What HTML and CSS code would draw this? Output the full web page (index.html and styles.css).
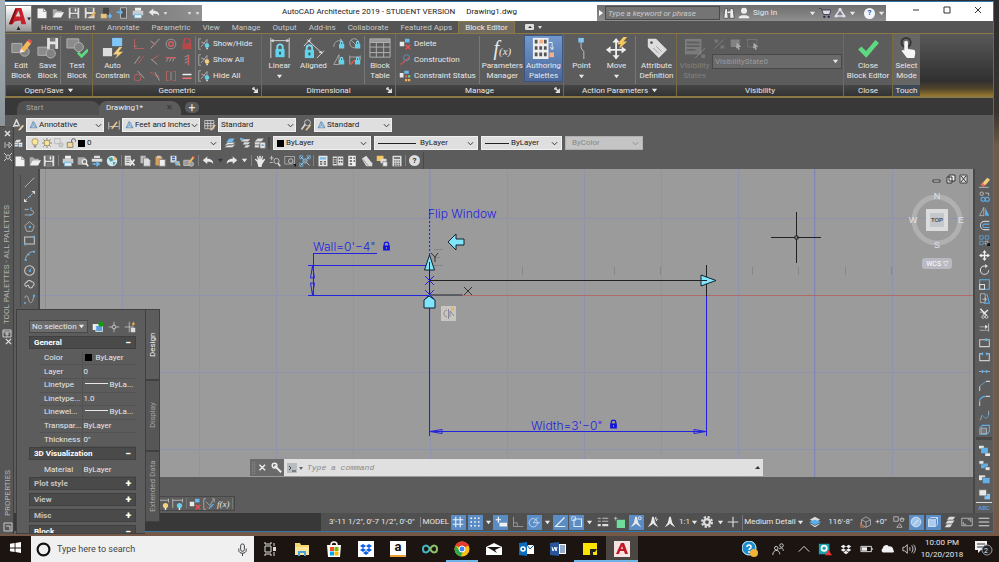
FILE: index.html
```
<!DOCTYPE html>
<html lang="en">
<head>
  <meta charset="utf-8">
  <title>AutoCAD Architecture 2019 - STUDENT VERSION</title>
  <link rel="stylesheet" href="styles.css">
</head>
<body>
  <!-- icon sprite -->
  <svg class="sprite" aria-hidden="true">
    <symbol id="new" viewBox="0 0 16 16"><path d="M2 2h8l4 4v9H2z" fill="#f2f2f2"/><path d="M10 2v4h4" stroke="#888"/></symbol>
    <symbol id="open" viewBox="0 0 16 16"><path d="M1 14V3h5l1 2h6v2H5z" fill="#aaa"/><path d="M5 7h11l-4 7H1z" fill="#eee"/></symbol>
    <symbol id="save" viewBox="0 0 16 16"><path d="M1 1h14v14H1z" fill="#ddd"/><path d="M4 1v6h8V1M4 15v-5h8v5" fill="#777" stroke="#555"/><path d="M9 2h2v4H9z" fill="#eee"/></symbol>
    <symbol id="print" viewBox="0 0 16 16"><path d="M4 1h8v4H4z" fill="#eee"/><path d="M1 5h14v6H1z" fill="#ccc"/><path d="M3 9h10v6H3z" fill="#7ec4ee"/><path d="M4 11h8v3H4z" fill="#eee"/></symbol>
    <symbol id="saveas" viewBox="0 0 16 16"><path d="M1 1h13v14H1z" fill="#ddd"/><path d="M4 1v5h7V1M4 15v-5h8" fill="#777" stroke="#555"/><path d="M8 13l6-7 2 2-6 6z" fill="#f0b050"/></symbol>
    <symbol id="phoneout" viewBox="0 0 16 16"><path d="M4 1h8v12H4z" fill="#444"/><path d="M1 9h8v6H1z" fill="#e9c27a"/><path d="M9 12h6M12 9l3 3-3 3" stroke="#6ab7f0" stroke-width="2"/></symbol>
    <symbol id="phonein" viewBox="0 0 16 16"><path d="M6 1h8v14H6z" fill="#555" stroke="#ccc"/><path d="M1 7h7M5 4l3 3-3 3" stroke="#6ab7f0" stroke-width="2"/></symbol>
    <symbol id="undo" viewBox="0 0 16 16"><path d="M1 7l6-5v3c5 0 8 2 8 7-2-3-4-3-8-3v3z" fill="currentColor"/></symbol>
    <symbol id="redo" viewBox="0 0 16 16"><path d="M15 7L9 2v3c-5 0-8 2-8 7 2-3 4-3 8-3v3z" fill="currentColor"/></symbol>
    <symbol id="down" viewBox="0 0 8 8"><path d="M1 2h6L4 6z" fill="currentColor"/></symbol>
    <symbol id="chev" viewBox="0 0 8 8"><path d="M1 2.500l3 3 3-3" stroke="currentColor"/></symbol>
    <symbol id="corner" viewBox="0 0 8 8"><path d="M1 1h2M1 1v2M2 2l4 4M6 2v4H2" stroke="currentColor" stroke-width="1.500"/></symbol>

    <symbol id="editblock" viewBox="0 0 24 24"><path d="M2 7h11v10H2z" fill="#8b8b8b" stroke="#b5b5b5"/><circle cx="16" cy="16" r="5" fill="#828282" stroke="#b5b5b5"/><path d="M12 13l7-9 4 3-7 9-5 1z" fill="#f3b75c"/><path d="M19 4l2-2 3 3-1 2z" fill="#f05050"/><path d="M12 13l4 3-5 1z" fill="#eee"/></symbol>
    <symbol id="saveblock" viewBox="0 0 24 24"><path d="M1 11h11v9H1z" fill="#8b8b8b" stroke="#b5b5b5"/><circle cx="15" cy="18" r="5" fill="#828282" stroke="#b5b5b5"/><path d="M11 1h12v12H11z" fill="#e4e4e4"/><path d="M14 1h6v4h-6zM14 8h6v5h-6z" fill="#777"/></symbol>
    <symbol id="testblock" viewBox="0 0 24 24"><path d="M1 2h13v10H1z" fill="#8b8b8b" stroke="#b5b5b5"/><circle cx="14" cy="11" r="5" fill="#828282" stroke="#b5b5b5"/><path d="M13 17l4 4 7-7" stroke="#5ed982" stroke-width="3"/></symbol>
    <symbol id="auto" viewBox="0 0 24 24"><path d="M11 1h11v9H11z" fill="#80c6f8"/><path d="M1 12h10v9H1z" fill="#ddd"/><path d="M19 11l-7 8h5l-3 5 9-8h-5l4-5z" fill="#f8cf7a"/></symbol>
    <symbol id="g1" viewBox="0 0 16 16"><path d="M2 1v13h13" stroke="#cf6060"/><path d="M5 11h-3" stroke="#999"/></symbol>
    <symbol id="g2" viewBox="0 0 16 16"><path d="M2 14L14 1" stroke="#bbb"/><path d="M2 4l6 4" stroke="#bbb"/><circle cx="8" cy="8" r="1.500" fill="#cf6060"/></symbol>
    <symbol id="g3" viewBox="0 0 16 16"><circle cx="8" cy="8" r="6.500" stroke="#aaa"/><circle cx="8" cy="8" r="3" stroke="#d06060" stroke-width="2"/></symbol>
    <symbol id="g4" viewBox="0 0 16 16"><path d="M4 7V4a4 4 0 018 0v3" stroke="#c44" stroke-width="2"/><path d="M2 7h12v8H2z" fill="#b84848"/></symbol>
    <symbol id="g5" viewBox="0 0 16 16"><path d="M2 13l7-10" stroke="#bbb"/><path d="M7 13l7-10" stroke="#cf6060"/></symbol>
    <symbol id="g6" viewBox="0 0 16 16"><path d="M3 8L13 2M8 5" stroke="#cf6060"/><path d="M3 7l8 7" stroke="#bbb"/></symbol>
    <symbol id="g7" viewBox="0 0 16 16"><path d="M1 5h14" stroke="#cf6060" stroke-width="2"/><path d="M2 10l2-4M6 10l2-4M10 10l2-4" stroke="#aaa"/></symbol>
    <symbol id="g8" viewBox="0 0 16 16"><path d="M10 1v14" stroke="#cf6060" stroke-width="2"/><path d="M5 4l4-2M5 8l4-2M5 12l4-2" stroke="#aaa"/></symbol>
    <symbol id="g9" viewBox="0 0 16 16"><circle cx="6" cy="10" r="4.500" stroke="#d06060"/><path d="M6 1l9 10" stroke="#bbb"/></symbol>
    <symbol id="g10" viewBox="0 0 16 16"><path d="M1 4c6-2 5 6 13 4" stroke="#cf6060"/><path d="M8 3l6 11" stroke="#bbb"/></symbol>
    <symbol id="g11" viewBox="0 0 16 16"><path d="M5 2H2v12h3M11 2h3v12h-3" stroke="#cf6060"/><path d="M8 2v12" stroke="#aaa"/></symbol>
    <symbol id="g12" viewBox="0 0 16 16"><path d="M2 6h12" stroke="#eee" stroke-width="2"/><path d="M2 11h12" stroke="#f07070" stroke-width="2"/></symbol>
    <symbol id="sh" viewBox="0 0 16 16"><path d="M4 1H1v14h3M4 12L12 2v6M4 5l6 3" stroke="#bbb"/><circle cx="12" cy="10" r="3" fill="currentColor"/><path d="M11 13h2v2h-2z" fill="#eee"/></symbol>
    <symbol id="shx" viewBox="0 0 16 16"><path d="M4 1H1v14h3M12 1h3v5M4 5l5 5 5-8" stroke="#bbb"/><path d="M8 14l6-6" stroke="#60b0ea" stroke-width="2"/><path d="M4 11l3 3" stroke="#e55"/></symbol>
    <symbol id="dimlamp" viewBox="0 0 16 16"><path d="M1 1v12M1 3h13M14 1v5" stroke="#ccc"/><circle cx="10" cy="10" r="3.500" fill="currentColor"/><path d="M9 13h2v3H9z" fill="#eee"/></symbol>
    <symbol id="linear" viewBox="0 0 24 24"><path d="M2 1v22M22 1v22M2 4h20" stroke="#ddd"/><path d="M2 4l3-2v4zM22 4l-3-2v4z" fill="#ddd"/><path d="M9 14v-3a3 3 0 016 0v3" stroke="#7adcf0" stroke-width="2"/><path d="M7 13h10v9H7z" fill="#62d3ea"/><path d="M12 16v3" stroke="#256" stroke-width="2"/></symbol>
    <symbol id="aligned" viewBox="0 0 24 24"><path d="M1 10L9 1M15 23l8-8M5 3l16 15" stroke="#ddd"/><path d="M5 3l4 1-3 2zM21 18l-4-1 3-2z" fill="#ddd"/><path d="M4 15v-3a3 3 0 016 0v3" stroke="#7adcf0" stroke-width="2"/><path d="M2 14h10v9H2z" fill="#62d3ea"/><path d="M7 17v3" stroke="#256" stroke-width="2"/></symbol>
    <symbol id="dlock" viewBox="0 0 16 16"><path d="M8 8h7v6H8z" fill="#62d3ea"/><path d="M10 8V6a1.500 1.500 0 013 0v2" stroke="#7adcf0" stroke-width="1.500"/></symbol>
    <symbol id="d1" viewBox="0 0 16 16"><path d="M1 12C1 5 6 3 12 3M9 1l3 2-3 2" stroke="#bbb"/><use href="#dlock"/></symbol>
    <symbol id="d2" viewBox="0 0 16 16"><circle cx="7" cy="7" r="6" stroke="#bbb"/><path d="M3 3l8 8" stroke="#bbb"/><use href="#dlock"/></symbol>
    <symbol id="d3" viewBox="0 0 16 16"><path d="M1 14L8 1v13M1 14h7" stroke="#bbb"/><use href="#dlock"/></symbol>
    <symbol id="d4" viewBox="0 0 16 16"><path d="M1 2v12M15 2v6M1 4h14" stroke="#bbb"/><path d="M2 14l6-6" stroke="#e55" stroke-width="2"/><use href="#dlock"/></symbol>
    <symbol id="table" viewBox="0 0 24 24"><path d="M1 2h22v4H1z" fill="#999"/><path d="M1 2h22v20H1zM1 6h22M1 11h22M1 17h22M8 6v16M16 6v16" stroke="#b5b5b5"/></symbol>
    <symbol id="del" viewBox="0 0 16 16"><path d="M1 5h6v6H1z" fill="#e8e8e8"/><path d="M8 1h6v5H8z" fill="#6bb8ec"/><path d="M9 9l6 6M15 9l-6 6" stroke="#f05050" stroke-width="2"/></symbol>
    <symbol id="constr" viewBox="0 0 16 16"><path d="M2 14L13 5" stroke="#e05050" stroke-width="2" stroke-dasharray="3 1"/><circle cx="10" cy="5" r="4" stroke="#5a9fd0"/></symbol>
    <symbol id="cstat" viewBox="0 0 16 16"><path d="M1 4h5v6H1z" fill="#e8e8e8"/><path d="M7 1h6v4H7z" fill="#6bb8ec"/><path d="M8 7h3v3H8z" fill="#f05050"/><path d="M12 7h3v3h-3z" fill="#5ed982"/><path d="M8 12h3v3H8zM12 12h3v3h-3z" fill="#f8b050"/></symbol>
    <symbol id="palettes" viewBox="0 0 24 24"><path d="M1 1h17v23H1z" fill="#eee"/><path d="M3 3h3v4H3zM3 10h3v4H3zM3 17h3v4H3zM8 10h3v4H8zM8 17h3v4H8zM13 3h3v4h-3zM13 10h3v4h-3zM13 17h3v4h-3z" fill="#555"/><path d="M8 3h4v4H8zM19 17h5v5h-5z" fill="#f5b183"/><path d="M18 6h4v7M20 11l2 3 2-3" stroke="#eee"/></symbol>
    <symbol id="point" viewBox="0 0 24 24"><path d="M11 5v7l3 4v8" stroke="#c5c5c5"/><path d="M8 1h6v5H8z" fill="#7ec4f5"/></symbol>
    <symbol id="move" viewBox="0 0 24 24"><path d="M11 4v20M1 14h20" stroke="#eee" stroke-width="2"/><path d="M7 6l4-5 4 5zM7 20l4 4 4-4zM5 10l-5 4 5 4zM17 10l5 4-5 4z" fill="#eee"/><path d="M19 0l-7 8h4l-2 5 9-8h-4l4-5z" fill="#f8c860"/></symbol>
    <symbol id="tag" viewBox="0 0 24 24"><path d="M2 2h9l12 12-9 9L2 11z" fill="#ddd"/><circle cx="6" cy="6" r="1.500" fill="#5c5c5c"/><path d="M8 12l6 6M11 10l6 6" stroke="#999"/></symbol>
    <symbol id="vstates" viewBox="0 0 24 24"><path d="M1 2h18v17H1z" fill="#7c7c7c"/><path d="M3 6h14M3 10h14M3 14h10" stroke="#606060" stroke-width="2"/><path d="M12 23L23 12" stroke="#888"/><path d="M12 14h4v3h-4zM19 19h4v4h-4z" fill="#777"/></symbol>
    <symbol id="v1" viewBox="0 0 16 16"><path d="M2 14L14 2" stroke="#888"/><path d="M2 2h5v4H2zM10 10h5v4h-5z" fill="#777"/></symbol>
    <symbol id="v2" viewBox="0 0 16 16"><path d="M1 2h12v10H1z" fill="#828282"/><path d="M9 6l6 6h-3l1 3-2 1-1-3-2 1z" fill="#aaa"/></symbol>
    <symbol id="v3" viewBox="0 0 16 16"><path d="M1 2h12v10H1z" stroke="#888" stroke-dasharray="2 1"/><path d="M9 6l6 6h-3l1 3-2 1-1-3-2 1z" fill="#aaa"/></symbol>
    <symbol id="check" viewBox="0 0 24 24"><path d="M3 12l7 7L22 5" stroke="#5ed982" stroke-width="5"/></symbol>
    <symbol id="touch" viewBox="0 0 24 24"><circle cx="11" cy="6" r="5" stroke="#333" stroke-width="2"/><path d="M9 6a2 2 0 014 0v7l6 1c2 0 2 2 2 4l-1 5h-8l-6-8 2-1 1 1z" fill="#f5f5f5"/></symbol>

    <symbol id="astyle" viewBox="0 0 16 16"><path d="M1 13L6 1l4 9M3 9h5" stroke="#ddd" stroke-width="2"/><path d="M8 15l6-7 2 1-5 6z" fill="#f0ddb5"/></symbol>
    <symbol id="dstyle" viewBox="0 0 16 16"><path d="M1 4v10M15 2v12M2 10h12" stroke="#ddd"/><path d="M5 13l7-9" stroke="#f0c890" stroke-width="2"/></symbol>
    <symbol id="tstyle" viewBox="0 0 16 16"><path d="M1 2h12v11H1zM1 6h12M1 9h12M5 2v11M9 2v11" stroke="#ddd"/><path d="M9 15l6-7" stroke="#f0c890" stroke-width="2"/></symbol>
    <symbol id="mstyle" viewBox="0 0 16 16"><path d="M2 14L7 7" stroke="#ddd" stroke-width="2"/><circle cx="10" cy="5" r="4" stroke="#ddd"/><path d="M8 15l6-7" stroke="#f0c890" stroke-width="2"/></symbol>
    <symbol id="tri" viewBox="0 0 16 16"><path d="M2 13L7 2l3 2 4 9zM7 2l1 6-6 5M8 8l6 5" stroke="#4678a8" fill="#b9d2e8"/></symbol>
    <symbol id="bulb" viewBox="0 0 16 16"><path d="M5 11c0-2-2-3-2-5a5 5 0 0110 0c0 2-2 3-2 5z" fill="#fbe59a" stroke="#8a7a40"/><path d="M6 12h4v3H6z" fill="#888"/></symbol>
    <symbol id="sun" viewBox="0 0 16 16"><path d="M8 0v16M0 8h16M2 2l12 12M14 2L2 14" stroke="#555"/><circle cx="8" cy="8" r="4.500" fill="#fbe59a" stroke="#8a7a40"/></symbol>
    <symbol id="vpf" viewBox="0 0 16 16"><path d="M1 1h9v8H1z" stroke="#aaa"/><circle cx="11" cy="11" r="3.500" fill="#ccc" stroke="#aaa"/></symbol>
    <symbol id="unlock" viewBox="0 0 16 16"><path d="M9 7V4a3 3 0 016 0v2" stroke="#555" stroke-width="1.500"/><path d="M2 7h9v8H2z" fill="#f3dc9b" stroke="#555"/></symbol>
    <symbol id="layers" viewBox="0 0 16 16"><path d="M1 11l4-4h10l-4 4zM1 14l4-4h10l-4 4z" fill="#e8e8e8" stroke="#777"/><path d="M3 7l4-5h7l-3 5z" fill="#72bdf0"/></symbol>
    <symbol id="layers2" viewBox="0 0 16 16"><path d="M3 6l3-3h9l-3 3zM5 10l2-3h8l-3 3zM7 14l2-3h6l-3 3z" fill="#ddd"/><path d="M1 1l5 1-3 4z" fill="#72bdf0"/></symbol>
    <symbol id="layers3" viewBox="0 0 16 16"><path d="M1 6l4-4h8l-3 4zM1 10V7h8v3zM1 14v-3h6v3z" fill="#ddd"/><path d="M8 7h7v8H8z" fill="#eee" stroke="#777"/><path d="M10 11h3" stroke="#4a9ad0" stroke-width="2"/></symbol>
    <symbol id="preview" viewBox="0 0 16 16"><path d="M1 3h9l3 3v7H1z" fill="#aaa"/><circle cx="10" cy="9" r="3" stroke="#eee" stroke-width="1.500" fill="#777"/><path d="M12 11l3 4" stroke="#eee" stroke-width="2"/></symbol>
    <symbol id="publish" viewBox="0 0 16 16"><path d="M4 1h8v3H4zM1 5h14v4H1z" fill="#ddd"/><path d="M2 12h8M7 9l4 3-4 3" stroke="#6ab7f0" stroke-width="2"/></symbol>
    <symbol id="globe" viewBox="0 0 16 16"><circle cx="8" cy="8" r="7" fill="#cfe6f5"/><path d="M3 4l5-1 2 4-4 2zM9 9l4 1-3 4z" fill="#4a9f90"/><path d="M11 2l4 3-4 2z" fill="#f0b060"/></symbol>
    <symbol id="cut" viewBox="0 0 16 16"><path d="M1 1h8v13H1z" fill="#ddd"/><path d="M3 4h5M3 7h5M3 10h4" stroke="#666"/><path d="M8 6l6 8M14 6l-6 8" stroke="#eee" stroke-width="2"/></symbol>
    <symbol id="copy" viewBox="0 0 16 16"><path d="M2 1h7v10H2z" fill="#bbb"/><path d="M6 4h6l3 3v8H6z" fill="#ddd" stroke="#777"/></symbol>
    <symbol id="paste" viewBox="0 0 16 16"><path d="M2 2h9v12H2z" fill="#d9a05a"/><path d="M4 1h5v3H4z" fill="#ccc"/><path d="M7 6h8v9H7z" fill="#eee" stroke="#777"/></symbol>
    <symbol id="match" viewBox="0 0 16 16"><path d="M2 1h8v9H2z" fill="#ddd"/><path d="M4 3h4M4 6h4" stroke="#46a" stroke-width="2"/><path d="M7 8h7l1 6H9z" fill="#72bdf0"/><path d="M10 9l5 5" stroke="#f0b060" stroke-width="2"/></symbol>
    <symbol id="bedit" viewBox="0 0 16 16"><path d="M1 7h9v7H1z" fill="#999" stroke="#ccc"/><circle cx="11" cy="12" r="3" fill="#999" stroke="#ccc"/><path d="M7 10l6-8 2 2-6 7z" fill="#f3b75c"/><path d="M12 2l2-1 2 2-1 1z" fill="#f05050"/></symbol>
    <symbol id="hand" viewBox="0 0 16 16"><path d="M4 9L1 6l1-1 3 2-1-5 1-1 2 5V1h2v5l2-5 1 1-1 5 3-2 1 1-4 6-1 4H6z" fill="#e8e8e8"/></symbol>
    <symbol id="zoomrt" viewBox="0 0 16 16"><path d="M1 4h5M3.500 1v6M1 10h4" stroke="#ddd"/><circle cx="10" cy="8" r="3.500" stroke="#ddd"/><path d="M12 11l3 4" stroke="#ddd" stroke-width="2"/></symbol>
    <symbol id="zoomw" viewBox="0 0 16 16"><path d="M1 2h13v10H1z" stroke="#bbb"/><circle cx="9" cy="8" r="3" stroke="#ddd"/><path d="M12 12h4v4z" fill="#111"/></symbol>
    <symbol id="zoome" viewBox="0 0 16 16"><path d="M2 2l12 12M14 2L2 14" stroke="#ddd"/><path d="M1 1h4v4H1zM11 1h4v4h-4zM1 11h4v4H1z" stroke="#72bdf0"/><circle cx="8" cy="8" r="3" fill="#888" stroke="#72bdf0"/></symbol>
    <symbol id="props" viewBox="0 0 16 16"><path d="M2 1h12v14H2z" fill="#e5e5e5"/><path d="M4 3h8v3H4z" fill="#72bdf0"/><path d="M4 9h3M9 9h3M4 12h3M9 12h3" stroke="#666" stroke-width="2"/></symbol>
    <symbol id="dc" viewBox="0 0 16 16"><path d="M1 2h14v12H1z" fill="#ddd"/><path d="M7 2v12" stroke="#666"/><path d="M2 5h4M2 8h4M2 11h4M9 5h2M12 5h2M9 9h2M12 9h2" stroke="#555" stroke-width="2"/></symbol>
    <symbol id="tp" viewBox="0 0 16 16"><path d="M3 1h10v14H3z" fill="#eee"/><path d="M5 4h3M5 8h3M5 12h3M10 4h2M10 8h2" stroke="#555" stroke-width="2"/></symbol>
    <symbol id="ssm" viewBox="0 0 16 16"><path d="M1 5l6-4 8 10v4H7z" fill="#ddd"/><path d="M2 5l8 10" stroke="#888"/></symbol>
    <symbol id="markup" viewBox="0 0 16 16"><path d="M1 1h9v7H1z" fill="#f3c860"/><path d="M6 5h8v6H6z" fill="#ddd"/><path d="M9 9h6v6H9z" fill="#eee" stroke="#777"/></symbol>
    <symbol id="calc" viewBox="0 0 16 16"><path d="M2 1h12v14H2z" fill="#ddd"/><path d="M4 3h8v2H4z" fill="#555"/><path d="M4 8h2M7 8h2M10 8h2M4 11h2M7 11h2M10 11h2M4 13.500h2M7 13.500h2M10 13.500h2" stroke="#555" stroke-width="1.500"/></symbol>

    <symbol id="line" viewBox="0 0 16 16"><path d="M2 14L14 2" stroke="#ccc"/><path d="M1 13h2v2H1zM13 1h2v2h-2z" fill="#60b0ea"/></symbol>
    <symbol id="xline" viewBox="0 0 16 16"><path d="M1 15L15 1" stroke="#ccc" stroke-dasharray="5 1"/><path d="M0 16v-5l5 5zM16 0v5l-5-5z" fill="#ddd"/><path d="M7 7h3v2H7z" fill="#60b0ea"/></symbol>
    <symbol id="pline" viewBox="0 0 16 16"><path d="M1 13h9c5 0 5-7 0-7M2 5h5" stroke="#ccc"/><path d="M1 4h2v2H1zM8 12h2v2H8zM9 2h2v3H9z" fill="#60b0ea"/></symbol>
    <symbol id="poly" viewBox="0 0 16 16"><path d="M8 1l7 6-3 8H4L1 7z" stroke="#ccc"/><path d="M7 7h3v3H7z" fill="#60b0ea"/></symbol>
    <symbol id="rect" viewBox="0 0 16 16"><path d="M1 3h14v10H1z" stroke="#ccc" stroke-width="1.500"/><path d="M0 12h3v3H0zM13 1h3v3h-3z" fill="#60b0ea"/></symbol>
    <symbol id="arc" viewBox="0 0 16 16"><path d="M2 15C2 8 8 2 15 2" stroke="#ccc"/><path d="M1 13h3v3H1zM5 5h3v3H5zM13 1h3v3h-3z" fill="#60b0ea"/></symbol>
    <symbol id="circle" viewBox="0 0 16 16"><circle cx="8" cy="8" r="7" stroke="#ccc" stroke-width="1.500"/><path d="M8 8l4-4" stroke="#60b0ea"/><path d="M7 7h3v3H7z" fill="#60b0ea"/></symbol>
    <symbol id="cloud" viewBox="0 0 16 16"><path d="M3 11c-3-2-2-6 1-6 1-4 6-3 7-1 4 0 5 5 2 6-1 4-5 4-6 1 0-2-2-3-4 0z" stroke="#ccc" stroke-width="1.500"/></symbol>
    <symbol id="spline" viewBox="0 0 16 16"><path d="M1 6c2-7 5-2 6 3s6 6 7-6" stroke="#ccc"/><path d="M0 12h3v2H0zM13 1h3v3h-3z" fill="#60b0ea"/></symbol>

    <symbol id="erase" viewBox="0 0 16 16"><path d="M4 10l8-9 4 3-7 8z" fill="#f6cf7a"/><path d="M2 11l3-3 4 4-3 2z" fill="#ef6a5a"/><path d="M0 15h14" stroke="#ddd"/></symbol>
    <symbol id="mcopy" viewBox="0 0 16 16"><circle cx="4" cy="4" r="2.500" stroke="#ddd"/><circle cx="6" cy="12" r="3" stroke="#60b0ea" stroke-width="1.500"/><circle cx="12" cy="12" r="3" stroke="#60b0ea" stroke-width="1.500"/><path d="M9 3h5v4" stroke="#ddd"/></symbol>
    <symbol id="mirror" viewBox="0 0 16 16"><path d="M1 14L7 2v12z" stroke="#ccc"/><path d="M9 2v12h6z" fill="#60b0ea"/></symbol>
    <symbol id="offset" viewBox="0 0 16 16"><path d="M15 2H8a6 6 0 000 12h7" stroke="#ccc" stroke-width="1.500"/><path d="M15 6H8a2 2 0 000 5h7" stroke="#60b0ea" stroke-width="1.500"/></symbol>
    <symbol id="array" viewBox="0 0 16 16"><path d="M1 1h5v5H1zM9 1h5v5H9zM1 9h5v5H1z" stroke="#60b0ea"/><path d="M9 9h4v4H9z" stroke="#ccc"/><path d="M12 12h4v4h-4z" fill="#111"/></symbol>
    <symbol id="mmove" viewBox="0 0 16 16"><path d="M8 2v12M2 8h12" stroke="#eee" stroke-width="2"/><path d="M5 4l3-4 3 4zM5 12l3 4 3-4zM4 5L0 8l4 3zM12 5l4 3-4 3z" fill="#eee"/></symbol>
    <symbol id="rotate" viewBox="0 0 16 16"><path d="M14 9A6 6 0 118 3h3" stroke="#ddd" stroke-width="1.500"/><path d="M9 0l4 3-4 3z" fill="#ddd"/></symbol>
    <symbol id="scale" viewBox="0 0 16 16"><path d="M1 1h14v14H1z" stroke="#60b0ea" stroke-width="1.500"/><path d="M1 8h7v7H1z" stroke="#ddd" stroke-width="1.500"/></symbol>
    <symbol id="stretch" viewBox="0 0 16 16"><path d="M2 1h7v13H2z" stroke="#ccc"/><path d="M9 2l3 1 3 12H7" stroke="#60b0ea" stroke-width="1.500"/><path d="M5 9h5M8 7l3 2-3 3" stroke="#ddd"/></symbol>
    <symbol id="trim" viewBox="0 0 16 16"><path d="M2 1l9 10M13 3L6 9" stroke="#eee" stroke-width="2"/><path d="M1 6h8" stroke="#ddd"/><circle cx="11" cy="13" r="2" stroke="#eee"/><circle cx="6" cy="13" r="2" stroke="#eee"/></symbol>
    <symbol id="extend" viewBox="0 0 16 16"><path d="M14 2v12" stroke="#ddd"/><path d="M1 7h8M1 12h12" stroke="#ccc"/><path d="M9 4l4 3-4 3z" fill="#eee"/></symbol>
    <symbol id="brk" viewBox="0 0 16 16"><path d="M1 4h14v10H1z" stroke="#ccc" stroke-width="1.500"/><path d="M9 2h3v4H9z" fill="#60b0ea"/></symbol>
    <symbol id="brk2" viewBox="0 0 16 16"><path d="M5 4H1v10h14V4h-4" stroke="#ccc" stroke-width="1.500"/><path d="M4 2h2v4H4zM10 2h2v4h-2z" fill="#60b0ea"/></symbol>
    <symbol id="join" viewBox="0 0 16 16"><path d="M0 8h16" stroke="#ccc"/><path d="M4 5l4 3-4 3zM12 5L8 8l4 3z" fill="#60b0ea"/></symbol>
    <symbol id="chamfer" viewBox="0 0 16 16"><path d="M1 16V9M10 2h6" stroke="#ccc" stroke-width="1.500"/><path d="M1 9l9-7" stroke="#60b0ea"/></symbol>
    <symbol id="fillet" viewBox="0 0 16 16"><path d="M1 16V9M10 2h6" stroke="#ccc" stroke-width="1.500"/><path d="M1 9c0-4 4-7 9-7" stroke="#60b0ea" stroke-width="1.500"/></symbol>
    <symbol id="blend" viewBox="0 0 16 16"><path d="M1 15c2-1 2-4 3-6M14 1v6" stroke="#ccc"/><path d="M3 9c3-4 4 3 7 3s4-4 4-7" stroke="#60b0ea"/></symbol>
    <symbol id="explode" viewBox="0 0 16 16"><path d="M5 2h10v9l-4 4H1V6z" stroke="#60b0ea" stroke-width="1.500"/><path d="M3 6h8v8H3z" fill="#777" stroke="#ccc"/></symbol>
    <symbol id="front1" viewBox="0 0 16 16"><path d="M0 1h7v4H0zM9 12h7v4H9z" fill="#e8e8e8"/><path d="M3 4h10v8H3z" fill="#60b0ea"/></symbol>
    <symbol id="front2" viewBox="0 0 16 16"><path d="M3 5h10v7H3z" fill="#60b0ea"/><path d="M0 1h7v5H0zM9 10h7v5H9z" fill="#e8e8e8" stroke="#5c5c5c"/></symbol>
    <symbol id="front3" viewBox="0 0 16 16"><path d="M0 2h9v7H0z" fill="#e8e8e8"/><path d="M5 5h11v9H5z" fill="#60b0ea" stroke="#5c5c5c"/></symbol>
    <symbol id="front4" viewBox="0 0 16 16"><path d="M8 7h8v8H8z" fill="#80c6f8"/><path d="M0 1h11v9H0z" fill="#e8e8e8" stroke="#5c5c5c"/></symbol>

    <symbol id="padlock" viewBox="0 0 16 16"><path d="M4 8V5a4 4 0 018 0v3" stroke="#1111e0" stroke-width="2"/><path d="M2 7h12v9H2z" fill="#1111e0"/><path d="M8 10v3" stroke="#9c9c9c" stroke-width="2"/></symbol>

    <symbol id="grid" viewBox="0 0 16 16"><path d="M5 1v14M11 1v14M1 5h14M1 11h14" stroke="#e8f2ff" stroke-width="1.500"/></symbol>
    <symbol id="dots" viewBox="0 0 16 16"><path d="M2 3h12M2 8h12M2 13h12" stroke="#fff" stroke-width="2" stroke-dasharray="2 3"/></symbol>
    <symbol id="dyn" viewBox="0 0 16 16"><path d="M1 5h7M4.500 1v8" stroke="#fff" stroke-width="1.500"/><path d="M6 9h10v5H6z" fill="#f0f0f0"/></symbol>
    <symbol id="ortho" viewBox="0 0 16 16"><path d="M2 1v13h13M2 9h5v5" stroke="#aaa"/></symbol>
    <symbol id="polar" viewBox="0 0 16 16"><circle cx="7" cy="9" r="5.500" stroke="#d5e8fa"/><path d="M7 9h9M7 9l6-7" stroke="#d5e8fa"/></symbol>
    <symbol id="angle" viewBox="0 0 16 16"><path d="M14 2L2 14h13" stroke="#e5f0fa" stroke-width="1.500"/></symbol>
    <symbol id="osnap" viewBox="0 0 16 16"><path d="M4 4h10v10H4z" stroke="#d5e8fa" stroke-width="1.500"/><path d="M1 1h5v5H1z" stroke="#d5e8fa"/></symbol>
    <symbol id="lwt" viewBox="0 0 16 16"><path d="M1 3h4M7 3h8M1 7h4M7 7h8" stroke="#ddd"/><path d="M1 12h4M7 12h8" stroke="#ddd" stroke-width="3"/></symbol>
    <symbol id="green" viewBox="0 0 16 16"><path d="M5 5h11v11H5z" fill="#6fdc9a"/><path d="M1 3h5M3.500 1v5" stroke="#ccc"/></symbol>
    <symbol id="anno" viewBox="0 0 16 16"><path d="M7 1h2l2 8 4 6-5-3-2-2-2 2-5 3 4-6z" fill="#e8e8e8"/></symbol>
    <symbol id="annov" viewBox="0 0 16 16"><use href="#anno"/><circle cx="13" cy="3" r="2" stroke="#fff"/></symbol>
    <symbol id="annoa" viewBox="0 0 16 16"><use href="#anno"/><path d="M12 1l-1 3h3l-2 3" stroke="#fff"/></symbol>
    <symbol id="gear" viewBox="0 0 16 16"><circle cx="8" cy="8" r="6.500" stroke="#ddd" stroke-width="3" stroke-dasharray="3 2.100"/><circle cx="8" cy="8" r="4" stroke="#ddd" stroke-width="3"/></symbol>
    <symbol id="plus" viewBox="0 0 16 16"><path d="M8 1v14M1 8h14" stroke="#ddd" stroke-width="1.500"/></symbol>
    <symbol id="cutplane" viewBox="0 0 16 16"><path d="M1 5l7-4 7 4-7 3z" fill="#ddd"/><path d="M0 8l8-3 8 3-8 4z" fill="#56aef0"/><path d="M2 11l6 4 6-4v-1l-6 3-6-3z" fill="#ddd"/></symbol>
    <symbol id="cube" viewBox="0 0 16 16"><path d="M2 5l6-4 6 4v7l-6 3-6-3zM2 5l6 3 6-3M8 8v7" stroke="#bbb"/><path d="M1 8v7h5" stroke="#e08050"/></symbol>
    <symbol id="shapes" viewBox="0 0 16 16"><path d="M1 1h6v6H1zM9 4h6M5 15l4-5 3 5z" stroke="#ccc"/><circle cx="12" cy="5" r="2.500" stroke="#ccc"/></symbol>
    <symbol id="iso" viewBox="0 0 16 16"><circle cx="8" cy="8" r="6.500" fill="#9dc4ea" stroke="#e5f0fa"/><path d="M5 12l6-7" stroke="#fff"/></symbol>
    <symbol id="box3" viewBox="0 0 16 16"><path d="M2 5h9v9H2z" fill="#a9cbee"/><path d="M2 5l3-3h9v9l-3 3H2zM11 5v9M2 5h9l3-3" stroke="#e5f0fa"/></symbol>
    <symbol id="perf" viewBox="0 0 16 16"><path d="M7 1h8l-3 4H4zM5 6h9l-3 4H2zM4 11h7l-3 4H1z" fill="#ddd"/></symbol>
    <symbol id="full" viewBox="0 0 16 16"><path d="M1 3h14v10H1z" stroke="#ccc"/><path d="M9 5h4v3M3 8v3h4" stroke="#ccc"/></symbol>
    <symbol id="menu" viewBox="0 0 16 16"><path d="M1 3h14M1 8h14M1 13h14" stroke="#ddd" stroke-width="1.500"/></symbol>
  </svg>

  <main class="app">
    <header class="header">
      <button class="app-btn" aria-label="Application menu">
        <svg viewBox="0 0 26 26"><path d="M3 19L10 2h6l5 17h-5l-1-4-6 1-2 3z" fill="#c8202c"/><path d="M10 11l3-6 2 6z" fill="#d5d5d5"/><path d="M3 19L10 2l1 2-5 15z" fill="#7e1018"/><path d="M22 12h4l-2 3zM11 25l2-4 2 4z" fill="#222"/></svg>
      </button>
      <div class="header-rows">
        <div class="titlebar">
          <div class="qat">
            <svg class="i"><use href="#new"/></svg><svg class="i"><use href="#open"/></svg><svg class="i"><use href="#save"/></svg><svg class="i"><use href="#saveas"/></svg><svg class="i"><use href="#phoneout"/></svg><svg class="i"><use href="#phonein"/></svg><svg class="i"><use href="#print"/></svg><svg class="i"><use href="#undo"/></svg><svg class="i-xs"><use href="#down"/></svg><svg class="i dim"><use href="#redo"/></svg><svg class="i-xs"><use href="#down"/></svg><svg class="i-xs"><use href="#down"/></svg>
          </div>
          <h1 class="title">AutoCAD Architecture 2019 - STUDENT VERSION <span>Drawing1.dwg</span></h1>
          <div class="info">
            <svg class="i-xs"><path d="M2 0v6l4-3z" fill="#fff"/></svg>
            <input class="search" type="text" aria-label="Search help" placeholder="Type a keyword or phrase">
            <svg class="i" viewBox="0 0 16 16"><path d="M3 2h3v4l1 9H1l1-9zM10 2h3l1 4 1 9H9V6z" fill="#eee" stroke="#444"/><path d="M6 7h4" stroke="#eee" stroke-width="2"/></svg>
            <svg class="i" viewBox="0 0 16 16"><circle cx="8" cy="5" r="4" fill="#eee"/><path d="M1 15v-2l4-2h6l4 2v2z" fill="#eee"/></svg>
            <button class="signin">Sign In</button>
            <svg class="i-xs"><use href="#down"/></svg>
            <svg class="i" viewBox="0 0 16 16"><path d="M0 2h3l3 8h8l2-6H4" fill="#ddd" stroke="#224"/><circle cx="7" cy="13" r="1.500" fill="#224"/><circle cx="13" cy="13" r="1.500" fill="#224"/></svg>
            <svg class="i" viewBox="0 0 16 16"><path d="M8 3l6 9H2z" stroke="#dde" stroke-width="2"/><circle cx="8" cy="3" r="2" fill="#dde"/><circle cx="3" cy="12" r="2" fill="#dde"/><circle cx="13" cy="12" r="2" fill="#dde"/></svg>
            <svg class="i-xs"><use href="#down"/></svg>
            <button class="help" aria-label="Help">?</button>
            <svg class="i-xs"><use href="#down"/></svg>
          </div>
          <div class="winctl">
            <button aria-label="Minimize"><svg viewBox="0 0 10 10"><path d="M2 5h6" stroke="#333"/></svg></button>
            <button aria-label="Maximize"><svg viewBox="0 0 10 10"><path d="M2 2h6v6H2z" stroke="#333"/></svg></button>
            <button aria-label="Close"><svg viewBox="0 0 10 10"><path d="M2 2l6 6M8 2L2 8" stroke="#333"/></svg></button>
          </div>
        </div>
        <nav class="tabs">
          <a href="#">Home</a><a href="#">Insert</a><a href="#">Annotate</a><a href="#">Parametric</a><a href="#">View</a><a href="#">Manage</a><a href="#">Output</a><a href="#">Add-ins</a><a href="#">Collaborate</a><a href="#">Featured Apps</a><a href="#" class="active">Block Editor</a>
          <svg class="tab-min" viewBox="0 0 20 8"><rect x="0" y="1" width="9" height="6" rx="1" fill="#ddd"/><path d="M3 5l2-2 2 2z" fill="#333"/><path d="M13 3h4l-2 3z" fill="#ddd"/></svg>
        </nav>
      </div>
    </header>

    <section class="ribbon">
      <div class="panel p-open">
        <div class="panel-body">
          <button class="big w28"><svg><use href="#editblock"/></svg>Edit<br>Block</button>
          <button class="big w22"><svg><use href="#saveblock"/></svg>Save<br>Block</button>
          <i class="sep"></i>
          <button class="big w28"><svg><use href="#testblock"/></svg>Test<br>Block</button>
        </div>
        <div class="panel-title">Open/Save <svg class="i-xs"><use href="#down"/></svg></div>
      </div>
      <div class="panel p-geo">
        <div class="panel-body">
          <button class="big w36"><svg><use href="#auto"/></svg>Auto<br>Constrain</button>
          <div class="icons four">
            <svg class="i"><use href="#g1"/></svg><svg class="i"><use href="#g2"/></svg><svg class="i"><use href="#g3"/></svg><svg class="i"><use href="#g4"/></svg>
            <svg class="i"><use href="#g5"/></svg><svg class="i"><use href="#g6"/></svg><svg class="i"><use href="#g7"/></svg><svg class="i"><use href="#g8"/></svg>
            <svg class="i"><use href="#g9"/></svg><svg class="i"><use href="#g10"/></svg><svg class="i"><use href="#g11"/></svg><svg class="i"><use href="#g12"/></svg>
          </div>
          <i class="sep"></i>
          <div class="list w-show">
            <button><svg class="i cyan"><use href="#sh"/></svg>Show/Hide</button>
            <button><svg class="i yellow"><use href="#sh"/></svg>Show All</button>
            <button><svg class="i cyan"><use href="#sh"/></svg>Hide All</button>
          </div>
        </div>
        <div class="panel-title">Geometric<svg class="i-xs launcher"><use href="#corner"/></svg></div>
      </div>
      <div class="panel p-dim">
        <div class="panel-body">
          <button class="big w34"><svg><use href="#linear"/></svg>Linear<svg class="arrow"><use href="#down"/></svg></button>
          <button class="big w34"><svg><use href="#aligned"/></svg>Aligned</button>
          <div class="icons two">
            <svg class="i"><use href="#d1"/></svg><svg class="i"><use href="#d2"/></svg><svg class="i"><use href="#d3"/></svg><svg class="i"><use href="#d4"/></svg>
          </div>
          <i class="sep"></i>
          <button class="big w28"><svg><use href="#table"/></svg>Block<br>Table</button>
        </div>
        <div class="panel-title">Dimensional<svg class="i-xs launcher"><use href="#corner"/></svg></div>
      </div>
      <div class="panel p-manage">
        <div class="panel-body">
          <div class="list w-manage">
            <button><svg class="i"><use href="#del"/></svg>Delete</button>
            <button><svg class="i"><use href="#constr"/></svg>Construction</button>
            <button><svg class="i"><use href="#cstat"/></svg>Constraint Status</button>
          </div>
          <i class="sep"></i>
          <button class="big w42"><span class="fx">f<small>(x)</small></span>Parameters<br>Manager</button>
          <button class="big w36 on"><svg><use href="#palettes"/></svg>Authoring<br>Palettes</button>
        </div>
        <div class="panel-title">Manage<svg class="i-xs launcher"><use href="#corner"/></svg></div>
      </div>
      <div class="panel p-action">
        <div class="panel-body">
          <button class="big w34"><svg><use href="#point"/></svg>Point<svg class="arrow"><use href="#down"/></svg></button>
          <button class="big w34"><svg><use href="#move"/></svg>Move<svg class="arrow"><use href="#down"/></svg></button>
          <i class="sep"></i>
          <button class="big w36"><svg><use href="#tag"/></svg>Attribute<br>Definition</button>
        </div>
        <div class="panel-title">Action Parameters <svg class="i-xs"><use href="#down"/></svg></div>
      </div>
      <div class="panel p-vis">
        <div class="panel-body">
          <button class="big w34" disabled><svg><use href="#vstates"/></svg>Visibility<br>States</button>
          <div class="vis-col">
            <div class="vis-icons"><svg class="i"><use href="#v1"/></svg><svg class="i"><use href="#v2"/></svg><svg class="i"><use href="#v3"/></svg></div>
            <label class="vis-select"><select aria-label="Visibility state" disabled><option>VisibilityState0</option></select><svg class="i-xs"><use href="#down"/></svg></label>
          </div>
        </div>
        <div class="panel-title">Visibility</div>
      </div>
      <div class="panel p-close">
        <div class="panel-body"><button class="big w48"><svg><use href="#check"/></svg>Close<br>Block Editor</button></div>
        <div class="panel-title">Close</div>
      </div>
      <div class="panel p-touch">
        <div class="panel-body"><button class="big w28"><svg><use href="#touch"/></svg>Select<br>Mode</button></div>
        <div class="panel-title">Touch</div>
      </div>
    </section>

    <nav class="doctabs">
      <a href="#" class="start">Start</a>
      <a href="#" class="active">Drawing1* <span>✕</span></a>
      <button aria-label="New drawing">+</button>
    </nav>

    <section class="toolbars">
      <div class="bar">
        <svg class="i"><use href="#astyle"/></svg>
        <label class="combo"><svg class="i-s"><use href="#tri"/></svg><select aria-label="Text style"><option>Annotative</option></select><svg class="i-xs"><use href="#chev"/></svg></label>
        <svg class="i"><use href="#dstyle"/></svg>
        <label class="combo"><svg class="i-s"><use href="#tri"/></svg><select aria-label="Dimension style"><option>Feet and Inches</option></select><svg class="i-xs"><use href="#chev"/></svg></label>
        <svg class="i"><use href="#tstyle"/></svg>
        <label class="combo"><select aria-label="Table style"><option>Standard</option></select><svg class="i-xs"><use href="#chev"/></svg></label>
        <svg class="i"><use href="#mstyle"/></svg>
        <label class="combo"><svg class="i-s"><use href="#tri"/></svg><select aria-label="Multileader style"><option>Standard</option></select><svg class="i-xs"><use href="#chev"/></svg></label>
      </div>
      <div class="bar bar-layers">
        <svg class="i"><use href="#layers3"/></svg>
        <label class="combo layer"><svg class="i-s"><use href="#bulb"/></svg><svg class="i-s"><use href="#sun"/></svg><svg class="i-s"><use href="#vpf"/></svg><svg class="i-s"><use href="#unlock"/></svg><i class="swatch"></i><select aria-label="Layer"><option>0</option></select><svg class="i-xs"><use href="#chev"/></svg></label>
        <div class="layer-tools"><svg class="i"><use href="#layers"/></svg><svg class="i"><use href="#layers2"/></svg><svg class="i"><use href="#layers3"/></svg></div>
        <label class="combo color"><i class="swatch"></i><select aria-label="Colour"><option>ByLayer</option></select><svg class="i-xs"><use href="#chev"/></svg></label>
        <label class="combo ltype"><i class="rule long"></i><select aria-label="Linetype"><option>ByLayer</option></select><svg class="i-xs"><use href="#chev"/></svg></label>
        <label class="combo lweight"><i class="rule"></i><select aria-label="Lineweight"><option>ByLayer</option></select><svg class="i-xs"><use href="#chev"/></svg></label>
        <label class="combo pstyle"><select aria-label="Plot style" disabled><option>ByColor</option></select><svg class="i-xs"><use href="#chev"/></svg></label>
      </div>
      <div class="bar bar-std">
        <svg class="i"><use href="#new"/></svg><svg class="i"><use href="#open"/></svg><svg class="i"><use href="#save"/></svg><i class="sep"></i>
        <svg class="i"><use href="#print"/></svg><svg class="i"><use href="#preview"/></svg><svg class="i"><use href="#publish"/></svg><svg class="i"><use href="#globe"/></svg><i class="sep"></i>
        <svg class="i"><use href="#cut"/></svg><svg class="i"><use href="#copy"/></svg><svg class="i"><use href="#paste"/></svg><svg class="i"><use href="#match"/></svg><svg class="i"><use href="#bedit"/></svg><i class="sep"></i>
        <svg class="i"><use href="#undo"/></svg><svg class="i-xs dark"><use href="#down"/></svg><svg class="i"><use href="#redo"/></svg><svg class="i-xs"><use href="#down"/></svg><i class="sep"></i>
        <svg class="i"><use href="#hand"/></svg><svg class="i"><use href="#zoomrt"/></svg><svg class="i"><use href="#zoomw"/></svg><svg class="i"><use href="#zoome"/></svg><i class="sep"></i>
        <svg class="i"><use href="#props"/></svg><svg class="i"><use href="#dc"/></svg><svg class="i"><use href="#tp"/></svg><svg class="i"><use href="#ssm"/></svg><svg class="i"><use href="#markup"/></svg><svg class="i"><use href="#calc"/></svg><i class="sep"></i>
        <button class="round" aria-label="Help">?</button>
      </div>
    </section>

    <section class="work">
      <div class="rail rail-left">
        <div class="rail-group">
          <svg class="i"><use href="#line"/></svg><svg class="i"><use href="#xline"/></svg><svg class="i"><use href="#pline"/></svg><svg class="i"><use href="#poly"/></svg><svg class="i"><use href="#rect"/></svg><svg class="i"><use href="#arc"/></svg><svg class="i"><use href="#circle"/></svg><svg class="i"><use href="#cloud"/></svg><svg class="i"><use href="#spline"/></svg>
        </div>
      </div>
      <div class="center">
        <div class="canvas">
          <svg class="drawing">
            <defs>
              <pattern id="gridlines" x="5" y="49" width="77" height="77" patternUnits="userSpaceOnUse"><path d="M.5 0v77M0 .5h77" stroke="#8f94ac"/></pattern>
            </defs>
            <rect width="100%" height="100%" fill="url(#gridlines)"/>
            <!-- drawing units start at the window's corner -->
            <g transform="translate(-40 -169)">
              <path d="M45.500 169v310M814.500 169v310" stroke="#8288ba"/>
              <path d="M429.500 169v40" stroke="#78a678"/>
              <path d="M434 249.500h9M434 257.500h6M434 265.500h9M522.500 267v8M614.500 267v8M660.500 267v8M752.500 267v8M798.500 267v8M845.500 267v8M891.500 267v8" stroke="#868686"/>
              <path d="M462 295.500h1000" stroke="#b06a6a"/>
              <path d="M313.500 253v43M313 253.500h64M308 265.500h121M308 295.500h121M429.500 296v140M706.500 281v155M430 431.500h276" stroke="#2222e0"/>
              <path d="M429.500 209v48" stroke="#2222e0" stroke-dasharray="2 2"/>
              <path d="M312.500 266l-2 12h4zM312.500 295l-2-12h4zM430 431.500l12-2v4zM706 431.500l-12-2v4z" stroke="#2222e0"/>
              <path d="M430 280.500h276M706.500 265v16M429.500 264v31h33M706.500 281v15" stroke="#222"/>
              <path d="M425 276l9 9M434 276l-9 9M425 290l9 9M434 290l-9 9" stroke="#2222e0"/>
              <path d="M464 287l8 8M472 287l-8 8M431 253l4 4 3-4M435 257v5" stroke="#333"/>
              <g fill="#80e4fb" stroke="#123">
                <path d="M448 242l8-8v5h8v6h-8v5z"/>
                <path d="M429.500 255l5 15h-10z"/>
                <path d="M701 275v11l15-5.500z"/>
                <path d="M424 308v-8l5-4 6 4v8z"/>
              </g>
              <path d="M429.500 262v8M701 280.500h6" stroke="#222"/>
              <path d="M771 237.500h24M797 237.500h24M796.500 212v24M796.500 239v24M795 236h3v3h-3z" stroke="#222"/>
              <path d="M441 306h15v15h-15z" fill="#c9c6c0"/>
              <path d="M447 310c-5 1-3 7 0 7M448.500 309v10M450 317v-6l4 5" stroke="#889"/><path d="M451 307h3v4h-3z" fill="#e8b46a"/>
              <g class="cad">
                <text x="428" y="218">Flip Window</text>
                <text x="313" y="251">Wall=0'−4"</text>
                <text x="531" y="430">Width=3'−0"</text>
              </g>
              <use href="#padlock" x="382" y="241" width="9" height="10"/>
              <use href="#padlock" x="609" y="419" width="9" height="10"/>
            </g>
          </svg>
          <div class="viewctl">
            <svg viewBox="0 0 36 10"><path d="M1 6h7v2H1z" fill="#eee" stroke="#333"/><path d="M17 1h6v6h-6zM15 3h5v6h-5z" fill="#eee" stroke="#333"/><path d="M28 1h7v8h-7z" fill="#ddd" stroke="#444"/><path d="M29 2l5 6M34 2l-5 6" stroke="#333"/></svg>
          </div>
          <div class="viewcube">
            <svg viewBox="0 0 60 60"><circle cx="30" cy="30" r="23" stroke="#b0b0b0" stroke-width="5"/><path d="M19 19h22v22H19z" fill="#dcdcdc"/><path d="M23 23h14v14H23z" fill="#c4c8cc"/>
              <g class="compass"><text x="30" y="9">N</text><text x="6" y="33">W</text><text x="54" y="33">E</text><text x="30" y="58">S</text><text x="30" y="32" class="face">TOP</text></g></svg>
            <button class="wcs">WCS <span>▽</span></button>
          </div>
          <div class="cmd">
            <svg class="cmd-tools" viewBox="0 0 34 18"><path d="M2 3v13M4 3v13" stroke="#999" stroke-dasharray="1 1"/><path d="M9 6l6 6M15 6l-6 6" stroke="#eee" stroke-width="1.500"/><path d="M25 7l7 7" stroke="#eee" stroke-width="2"/><circle cx="25" cy="7" r="2.500" stroke="#eee" stroke-width="1.500"/></svg>
            <svg class="prompt" viewBox="0 0 17 10"><path d="M0 0h10v10H0z" fill="#b7bcc2"/><path d="M2 3l2 2-2 2M5 8h4" stroke="#444"/><path d="M12 4h4l-2 3z" fill="#666"/></svg>
            <input type="text" aria-label="Command line" placeholder="Type a command">
            <svg class="i-xs"><path d="M1 5h5L4 2z" fill="#333"/></svg>
          </div>
        </div>
        <div class="below">
          <div class="blockbar">
            <svg class="i yellow"><use href="#dimlamp"/></svg><svg class="i cyan"><use href="#dimlamp"/></svg><i class="sep"></i><svg class="i"><use href="#del"/></svg><svg class="i"><use href="#shx"/></svg><em>f(x)</em><i class="sep"></i>
          </div>
        </div>
      </div>
      <div class="rail rail-right">
        <div class="rail-group grow">
          <svg class="i"><use href="#erase"/></svg><svg class="i"><use href="#mcopy"/></svg><svg class="i"><use href="#mirror"/></svg><svg class="i"><use href="#offset"/></svg><svg class="i"><use href="#array"/></svg><svg class="i"><use href="#mmove"/></svg><svg class="i"><use href="#rotate"/></svg><svg class="i"><use href="#scale"/></svg><svg class="i"><use href="#stretch"/></svg><svg class="i"><use href="#trim"/></svg><svg class="i"><use href="#extend"/></svg><svg class="i"><use href="#brk"/></svg><svg class="i"><use href="#brk2"/></svg><svg class="i"><use href="#join"/></svg><svg class="i"><use href="#chamfer"/></svg><svg class="i"><use href="#fillet"/></svg><svg class="i"><use href="#blend"/></svg><svg class="i"><use href="#explode"/></svg>
        </div>
        <div class="rail-group order">
          <svg class="i"><use href="#front1"/></svg><svg class="i"><use href="#front2"/></svg><svg class="i"><use href="#front3"/></svg><svg class="i"><use href="#front4"/></svg>
        </div>
        <div class="abc">ABC</div>
      </div>
    </section>

    <footer class="status">
      <div class="coords">3'-11 1/2", 0'-7 1/2", 0'-0"</div>
      <button class="model">MODEL</button>
      <button class="on" aria-label="Grid"><svg class="i"><use href="#grid"/></svg></button>
      <button class="on" aria-label="Snap"><svg class="i"><use href="#dots"/></svg></button>
      <svg class="i-s"><use href="#down"/></svg>
      <button class="on" aria-label="Dynamic input"><svg class="i"><use href="#dyn"/></svg></button>
      <button aria-label="Ortho"><svg class="i"><use href="#ortho"/></svg></button>
      <button class="on" aria-label="Polar tracking"><svg class="i"><use href="#polar"/></svg></button>
      <svg class="i-s"><use href="#down"/></svg>
      <button class="on" aria-label="Snap tracking"><svg class="i"><use href="#angle"/></svg></button>
      <button class="on" aria-label="Object snap"><svg class="i"><use href="#osnap"/></svg></button>
      <svg class="i-s"><use href="#down"/></svg>
      <button aria-label="Lineweight"><svg class="i"><use href="#lwt"/></svg></button>
      <button aria-label="Selection cycling"><svg class="i"><use href="#green"/></svg></button>
      <button class="on" aria-label="Annotation visibility"><svg class="i"><use href="#annov"/></svg></button>
      <button aria-label="Auto scale"><svg class="i"><use href="#annoa"/></svg></button>
      <button aria-label="Annotation scale"><svg class="i"><use href="#anno"/></svg></button>
      <button class="txt">1:1 <svg class="i-xs"><use href="#down"/></svg></button>
      <button aria-label="Workspace"><svg class="i"><use href="#gear"/></svg></button>
      <svg class="i-s"><use href="#down"/></svg>
      <button aria-label="Annotation monitor"><svg class="i"><use href="#plus"/></svg></button>
      <button class="txt detail">Medium Detail <svg class="i-xs"><use href="#down"/></svg></button>
      <button aria-label="Cut plane"><svg class="i"><use href="#cutplane"/></svg></button>
      <button class="txt cut">116'-8"</button>
      <button aria-label="Elevation"><svg class="i"><use href="#cube"/></svg></button>
      <button class="txt elev">+0"</button>
      <button aria-label="Isolate"><svg class="i"><use href="#shapes"/></svg></button>
      <button class="on" aria-label="Surface hatch"><svg class="i"><use href="#iso"/></svg></button>
      <button class="on" aria-label="Layer key"><svg class="i"><use href="#box3"/></svg></button>
      <button aria-label="Performance"><svg class="i"><use href="#perf"/></svg></button>
      <button aria-label="Clean screen"><svg class="i"><use href="#full"/></svg></button>
      <button aria-label="Customize"><svg class="i"><use href="#menu"/></svg></button>
    </footer>
  </main>

  <!-- floating palettes -->
  <aside class="tool-palettes">
    <svg class="pal-ctl" viewBox="0 0 12 36"><path d="M4 4l5 5M9 4l-5 5" stroke="#ddd" stroke-width="1.500"/><path d="M4 15v6M5 18h3M8 15l3 3-3 3z" stroke="#bbb"/><circle cx="7" cy="30" r="2" stroke="#ccc"/><path d="M3 26l2 2M11 26l-2 2M3 34l2-2M11 34l-2-2" stroke="#ccc"/></svg>
    <span class="vtext">TOOL PALETTES - ALL PALETTES</span>
    <svg class="i-s" viewBox="0 0 10 10"><path d="M1 1h8v7H1zM1 3h8M3 5h4M5 3v5" stroke="#ccc"/></svg>
  </aside>
  <aside class="properties">
    <div class="prop-strip">
      <svg class="i-xs" viewBox="0 0 8 8"><path d="M1 1l6 6M7 1L1 7" stroke="#ddd" stroke-width="1.500"/></svg>
      <span class="vtext">PROPERTIES</span>
      <svg class="i-s" viewBox="0 0 10 10"><path d="M1 1h8v8H1zM3 4h4v4" stroke="#ccc"/></svg>
    </div>
    <div class="prop-main">
      <div class="prop-top">
        <label class="prop-select"><select aria-label="Selection"><option>No selection</option></select><svg class="i-xs"><use href="#down"/></svg></label>
        <svg class="i" viewBox="0 0 16 16"><path d="M1 4h8v8H1z" fill="#eee"/><path d="M5 6h9v8H5z" fill="#5aa0dc" stroke="#eee"/><circle cx="12" cy="4" r="3.500" fill="#139a13"/></svg>
        <svg class="i" viewBox="0 0 16 16"><path d="M8 1v14M1 8h14" stroke="#ccc"/><circle cx="8" cy="8" r="2.500" fill="#5c5c5c" stroke="#ddd"/></svg>
        <svg class="i" viewBox="0 0 16 16"><path d="M7 1v14M1 8h12" stroke="#ccc"/><path d="M13 0l-3 5h2l-1 3 4-5h-2z" fill="#f3b040"/><path d="M9 9h6v6H9z" fill="#ddd"/></svg>
      </div>
      <h2>General <b>−</b></h2>
      <table class="props">
        <tr><th>Color</th><td><i class="swatch"></i>ByLayer</td></tr>
        <tr><th>Layer</th><td>0</td></tr>
        <tr><th>Linetype</th><td><i class="rule"></i>ByLa...</td></tr>
        <tr><th>Linetype...</th><td>1.0</td></tr>
        <tr><th>Linewei...</th><td><i class="rule"></i>ByLa...</td></tr>
        <tr><th>Transpar...</th><td>ByLayer</td></tr>
        <tr><th>Thickness</th><td>0"</td></tr>
      </table>
      <h2>3D Visualization <b>−</b></h2>
      <table class="props one">
        <tr><th>Material</th><td>ByLayer</td></tr>
      </table>
      <h2 class="shut">Plot style <b>+</b></h2>
      <h2 class="shut">View <b>+</b></h2>
      <h2 class="shut">Misc <b>+</b></h2>
      <h2>Block <b>−</b></h2>
    </div>
    <div class="prop-tabs">
      <button class="vtext active">Design</button>
      <button class="vtext">Display</button>
      <button class="vtext">Extended Data</button>
    </div>
  </aside>

  <footer class="taskbar">
    <button class="winbtn" aria-label="Start"><svg viewBox="0 0 12 12"><path d="M0 2l5-1v5H0zM6 1l6-1v6H6zM0 7h5v4l-5-1zM6 7h6v5l-6-1z" fill="#fff"/></svg></button>
    <label class="tasksearch"><svg viewBox="0 0 14 14"><circle cx="7" cy="7" r="5.500" stroke="#111" stroke-width="2"/></svg><input type="text" aria-label="Search" placeholder="Type here to search"><svg class="mic" viewBox="0 0 14 14"><rect x="5" y="1" width="4" height="8" rx="2" stroke="#333"/><path d="M3 6v2c0 4 8 4 8 0V6M7 11v3" stroke="#333"/></svg></label>
    <div class="apps">
      <button aria-label="Task view"><svg viewBox="0 0 16 16"><path d="M3 5h6v6H3zM3 1v2h6V1M3 15v-2h6v2M12 2v3M12 11v4" stroke="#ddd"/><path d="M11 6h3v4h-3z" fill="#ddd"/></svg></button>
      <button aria-label="File Explorer"><svg viewBox="0 0 16 16"><path d="M1 2h5l1 2h8v10H1z" fill="#f6d673"/><path d="M1 6h14v8H1z" fill="#fbe79a"/><path d="M4 15v-5h8v5h-2v-3H6v3z" fill="#4aa3df"/></svg></button>
      <button aria-label="Store"><svg viewBox="0 0 16 16"><path d="M5 4a3 3 0 016 0" stroke="#fff" stroke-width="1.500"/><path d="M1 4h14l-1 12H2z" fill="#fff"/><path d="M4 6h4v4H4z" fill="#f25022"/><path d="M8.500 6h4v4h-4z" fill="#7fba00"/><path d="M4 10.500h4v4H4z" fill="#00a4ef"/><path d="M8.500 10.500h4v4h-4z" fill="#ffb900"/></svg></button>
      <button aria-label="Dropbox"><svg viewBox="0 0 16 16"><path d="M0 0h16v16H0z" fill="#fff"/><path d="M5 3l3 2-3 2-3-2zM11 3l3 2-3 2-3-2zM5 7l3 2-3 2-3-2zM11 7l3 2-3 2-3-2zM8 10l3 2-3 2-3-2z" fill="#0d5fe8"/></svg></button>
      <button aria-label="Amazon"><span class="amazon">a</span></button>
      <button aria-label="Infinity"><svg viewBox="0 0 16 16"><path d="M8 8C5 3 1 4 1 8s4 5 7 0" stroke="#45b7c0" stroke-width="2"/><path d="M8 8c3-5 7-4 7 0s-4 5-7 0" stroke="#8fc46a" stroke-width="2"/></svg></button>
      <button aria-label="Chrome" class="run"><svg viewBox="0 0 16 16"><circle cx="8" cy="8" r="7.500" fill="#fbc116"/><path d="M8 8L1.500 4.300A7.500 7.500 0 0114.500 4.300z" fill="#e33b2e"/><path d="M1.500 4.300A7.500 7.500 0 007 15.400L9 10 5 9z" fill="#2da94f"/><path d="M8 4h6.500" stroke="#e33b2e" stroke-width="2"/><circle cx="8" cy="8" r="3" fill="#4285f4" stroke="#fff"/></svg></button>
      <button aria-label="Mail"><svg viewBox="0 0 16 16"><path d="M0 6l8-4 8 4v8H0z" fill="#fff"/><path d="M1 6h14l-6 3 2 3z" fill="#1b1411"/></svg></button>
      <button aria-label="Outlook"><svg viewBox="0 0 16 16"><path d="M9 4h7v9H9z" fill="#fff"/><path d="M9 4l3 4 4-4" stroke="#0a63b0"/><path d="M1 2l8-1v14l-8-1z" fill="#0a6cbd"/><circle cx="5" cy="8" r="2" stroke="#fff" stroke-width="1.500"/></svg></button>
      <button aria-label="Word"><svg viewBox="0 0 16 16"><path d="M9 3h7v10H9z" fill="#fff"/><path d="M10 5h5M10 7h5M10 9h5M10 11h5" stroke="#2a5699"/><path d="M0 2l9-1v14l-9-1z" fill="#2a5699"/><path d="M2 6l1 4 2-4 1 4 1-4" stroke="#fff"/></svg></button>
      <button aria-label="Sticky Notes" class="run"><svg viewBox="0 0 16 16"><path d="M1 2h14v12H1z" fill="#fde300"/><path d="M8 8h7l-4 6H8z" fill="#222"/><path d="M11 14v-3h4z" fill="#fde300"/></svg></button>
      <button aria-label="AutoCAD" class="run cur"><svg viewBox="0 0 16 16"><path d="M0 0h16v16H0z" fill="#f4e4e4"/><path d="M2 13L7 2h3l4 11h-3l-1-3H6l-1 3zM8 5L7 8h2z" fill="#c01824"/></svg></button>
    </div>
    <div class="tray">
      <svg viewBox="0 0 16 16"><circle cx="7" cy="7" r="7" fill="#1c8bd0" stroke="#dff"/><path d="M5 6a2 2 0 114 0c0 2-2 1-2 3M7 10v2" stroke="#fff" stroke-width="1.500"/><circle cx="12" cy="12" r="4" fill="#f2b233"/></svg>
      <svg viewBox="0 0 16 16"><circle cx="6" cy="7" r="2" stroke="#ddd"/><circle cx="12" cy="4" r="2" stroke="#ddd"/><path d="M2 15c0-7 8-7 8-1M9 8c3-2 5-1 5 2" stroke="#ddd"/></svg>
      <svg viewBox="0 0 16 16"><path d="M2 11l6-6 6 6" stroke="#eee"/></svg>
      <svg viewBox="0 0 16 16"><path d="M1 2h12v12H1z" fill="#19a3b0"/><circle cx="7" cy="7" r="3" stroke="#fff" stroke-width="2"/><path d="M8 15l4-6 4 6z" fill="#e33"/></svg>
      <svg viewBox="0 0 16 16"><path d="M5 3l3 2-3 2-3-2zM11 3l3 2-3 2-3-2zM5 7l3 2-3 2-3-2zM11 7l3 2-3 2-3-2zM8 10l3 2-3 2-3-2z" fill="#eee"/></svg>
      <svg viewBox="0 0 16 16"><path d="M1 5h12v6H1zM14 7v2" stroke="#eee"/><path d="M2 6h6v4H2z" fill="#eee"/></svg>
      <svg viewBox="0 0 16 16"><path d="M2 12a3 3 0 010-5 4 4 0 017-2 4 4 0 015 4 2 2 0 010 3z" fill="#f2f2f2"/></svg>
      <svg viewBox="0 0 16 16"><path d="M1 6h2l3-3v10l-3-3H1zM9 6v4M11 4c2 2 2 6 0 8M13 3c3 3 3 7 0 10" stroke="#ddd"/></svg>
    </div>
    <div class="clock">10:00 PM<br>10/20/2018</div>
    <button class="notes" aria-label="Notifications"><svg viewBox="0 0 20 18"><path d="M1 2h12v9H7l-3 3v-3H1z" fill="#f2f2f2"/><path d="M3 5h8M3 8h8" stroke="#333"/><circle cx="13" cy="11" r="5" fill="#222" stroke="#999"/></svg><span>2</span></button>
  </footer>
</body>
</html>
```

FILE: styles.css
```
* {
  box-sizing: border-box;
}
html, body {
  height: 100%;
  margin: 0;
}
body {
  position: relative;
  display: flex;
  flex-direction: column;
  overflow: hidden;
  font-family: Roboto, "Noto Sans", sans-serif;
  font-size: 8px;
  line-height: 10px;
  color: #e8e8e8;
  background:
    linear-gradient(#a9b2b6, #8b9498) no-repeat 0 0 / 5px 126px,
    linear-gradient(#2c2c2e 0, #3a3430 20%, #6f5b49 26%, #6f5b49 90%, #7a5546 100%);
}
button, input, select {
  font: inherit;
  color: inherit;
  background: none;
  border: 0;
  padding: 0;
  margin: 0;
}
select {
  appearance: none;
  min-width: 0;
  flex: 1;
}
select:disabled {
  opacity: 1;
}
a {
  color: inherit;
  text-decoration: none;
}
svg {
  fill: none;
  flex: none;
}
.sprite {
  display: none;
}
.i {
  width: 12px;
  height: 12px;
}
.i-s {
  width: 10px;
  height: 10px;
}
.i-xs {
  width: 7px;
  height: 7px;
}
.cyan {
  color: #62d3ea;
}
.yellow {
  color: #f8cf7a;
}
.dim {
  color: #888;
}
.dark {
  color: #334;
}
.sep {
  flex: none;
  width: 1px;
  align-self: stretch;
  background: #777;
}
.swatch {
  display: inline-block;
  flex: none;
  width: 7px;
  height: 7px;
  background: #000;
}
.rule {
  display: inline-block;
  flex: none;
  width: 24px;
  height: 1px;
  background: currentColor;
}
.vtext {
  writing-mode: vertical-rl;
  transform: rotate(180deg);
}

/* main window */
.app {
  flex: 1;
  min-height: 0;
  display: flex;
  flex-direction: column;
  margin: 1px 5px 4px;
  border: 1px solid #2f78ac;
  border-left: 0;
  background: #5c5c5c;
}
.header {
  display: flex;
  background: linear-gradient(#fff 19px, #545454 19px);
}
.app-btn {
  width: 27px;
  height: 27px;
  margin-top: 3px;
  border: 1px solid #777;
  background: linear-gradient(#fff, #999);
}
.app-btn svg {
  width: 25px;
  height: 25px;
}
.header-rows {
  flex: 1;
}
.titlebar {
  display: flex;
  align-items: flex-end;
  height: 19px;
}
.qat {
  display: flex;
  align-items: center;
  gap: 4px;
  width: 170px;
  height: 16px;
  padding-left: 4px;
  background: linear-gradient(90deg, #585858, #909090);
}
.qat .i-xs {
  width: 5px;
  margin-left: -1px;
}
.title {
  flex: 1;
  margin: 0;
  font-size: 8px;
  font-weight: 400;
  line-height: 18px;
  text-align: center;
  color: #222;
}
.title span {
  margin-left: 9px;
}
.info {
  display: flex;
  align-items: center;
  width: 289px;
  height: 16px;
  background: linear-gradient(#6e6e6e, #8e8e8e);
  gap: 3px;
}
.search {
  flex: none;
  width: 115px;
  height: 14px;
  margin-left: -2px;
  padding-left: 2px;
  border: 1px solid #4a4a4a;
  background: #747474;
  font-style: italic;
}
.search::placeholder {
  color: #c9c9c9;
}
.signin {
  flex: none;
  width: 53px;
  text-align: left;
}
.help {
  flex: none;
  width: 11px;
  height: 11px;
  margin-left: 5px;
  border-radius: 50%;
  background: #f2f5fa;
  color: #1e57b0;
  font-weight: 700;
}
.winctl {
  display: flex;
  width: 107px;
  height: 19px;
  padding-left: 14px;
}
.winctl button {
  flex: 1;
}
.winctl svg {
  width: 10px;
  height: 10px;
}
.tabs {
  display: flex;
  height: 12px;
  padding-left: 3px;
  color: #c8c8c8;
}
.tabs a {
  padding: 0 6px;
  line-height: 13px;
}
.tabs .active {
  color: #f0f0f0;
  background: #6f6b60;
  border: 1px solid #8c7846;
  border-bottom: 0;
  line-height: 11px;
}
.tab-min {
  width: 20px;
  height: 8px;
  margin: 2px 10px;
}

/* ribbon */
.ribbon {
  display: flex;
  height: 65px;
  border-top: 1px solid #8c7846;
  border-bottom: 2px solid #8c7846;
  background: linear-gradient(#585858, #303030 76%, #50432a 88%, #94772e);
}
.panel {
  display: flex;
  flex-direction: column;
  border-left: 1px solid #7a6a42;
  background: #5c5c5c;
}
.p-open { width: 87px; }
.p-geo { width: 169px; }
.p-dim { width: 134px; }
.p-manage { width: 168px; }
.p-action { width: 113px; }
.p-vis { width: 167px; }
.p-close { width: 49px; }
.p-touch { width: 28px; }
.panel-body {
  flex: 1;
  display: flex;
  align-items: flex-start;
  justify-content: space-between;
  padding: 2px 1px 1px;
}
.panel-title {
  display: flex;
  align-items: center;
  justify-content: center;
  gap: 3px;
  position: relative;
  height: 11px;
  background: linear-gradient(#464646, #333);
}
.launcher {
  position: absolute;
  right: 2px;
}
.p-touch .panel-title {
  background: #3c4a58;
}
.p-touch .panel-body {
  background: #666;
}
.big {
  display: block;
  padding-top: 1px;
  text-align: center;
  white-space: nowrap;
}
.big svg {
  display: block;
  width: 22px;
  height: 22px;
  margin: 0 auto 2px;
}
.big .arrow {
  width: 7px;
  height: 7px;
  margin-top: 2px;
  margin-bottom: 1px;
}
.big:disabled {
  color: #808080;
}
.big.on {
  background: linear-gradient(#7198cf, #4c6798);
  outline: 1px solid #3d5680;
}
.w22 { width: 22px; }
.w28 { width: 28px; }
.w34 { width: 33px; }
.w36 { width: 37px; }
.w42 { width: 42px; }
.w48 { width: 46px; }
.w-show { width: 64px; }
.w-manage { width: 80px; }
.p-touch .big {
  width: 25px;
}
.fx {
  display: block;
  height: 22px;
  margin-bottom: 2px;
  font: italic 20px/22px "Liberation Serif", serif;
}
.fx small {
  font-size: 11px;
}
.icons {
  display: grid;
  grid-auto-rows: 16px;
  grid-template-columns: repeat(4, 16px);
  place-items: center;
}
.icons.two {
  grid-template-columns: repeat(2, 16px);
}
.list {
  display: flex;
  flex-direction: column;
}
.list button {
  display: flex;
  align-items: center;
  gap: 3px;
  height: 16px;
  padding-left: 2px;
  white-space: nowrap;
}
.vis-col {
  width: 130px;
}
.vis-icons {
  display: flex;
  gap: 5px;
  padding: 2px 1px;
}
.vis-select {
  display: flex;
  align-items: center;
  height: 15px;
  margin-top: 2px;
  padding: 0 2px;
  border: 1px solid #484848;
  background: #6a6a6a;
}
.vis-select select:disabled {
  color: #9a9a9a;
}

/* drawing tabs */
.doctabs {
  display: flex;
  align-items: flex-end;
  height: 17px;
  padding-left: 12px;
  background: #383838;
  line-height: 14px;
}
.doctabs a {
  width: 84px;
  height: 14px;
  padding-left: 9px;
  background: #505050;
  border-radius: 8px 10px 0 0;
  color: #a8a8a8;
}
.doctabs .active {
  display: flex;
  justify-content: space-between;
  width: 82px;
  margin-left: -2px;
  padding: 0 8px 0 7px;
  background: #5c5c5c;
  color: #eee;
}
.doctabs .active span {
  color: #333;
}
.doctabs button {
  width: 14px;
  height: 11px;
  margin: 0 4px 2px;
  border-radius: 5px;
  background: #5a5a5a;
  font-size: 12px;
  line-height: 10px;
}

/* toolbars */
.toolbars {
  padding: 1px 0 0 5px;
}
.bar {
  display: flex;
  align-items: center;
  height: 18px;
  gap: 2px;
}
.bar > .i {
  margin-left: 2px;
}
.combo {
  display: flex;
  align-items: center;
  gap: 1px;
  width: 78px;
  height: 14px;
  padding: 0 1px 0 2px;
  border: 1px solid #f0f0f0;
  background: #dfdfdf;
  color: #222;
}
.combo .i-s {
  width: 9px;
}
.bar-layers {
  gap: 3px;
  padding-left: 4px;
}
.bar-layers > .i {
  width: 9px;
  margin-left: 0;
}
.bar-layers .combo {
  gap: 2px;
  padding: 0 3px;
}
.bar-layers .combo .i-s {
  width: 10px;
}
.layer {
  width: 195px;
}
.layer-tools {
  display: flex;
  gap: 3px;
  width: 46px;
  border-right: 2px solid #484848;
}
.color {
  width: 98px;
}
.ltype {
  width: 104px;
}
.rule.long {
  width: 38px;
  margin-right: 2px;
}
.lweight {
  width: 81px;
}
.pstyle {
  width: 78px;
  background: #c4c4c4;
  border-color: #b0b0b0;
  color: #888;
}
.pstyle select {
  padding-left: 3px;
}
.bar-std {
  width: 414px;
  height: 17px;
  gap: 0;
  justify-content: space-between;
  padding: 0 3px 0 4px;
  border-right: 1px solid #484848;
}
.bar-std > .i {
  margin-left: 0;
}
.bar-std .sep {
  margin: 3px 0;
  background: #808080;
}
.round {
  width: 11px;
  height: 11px;
  border-radius: 50%;
  background: #ddd;
  color: #333;
  font-weight: 700;
}

/* workspace */
.work {
  flex: 1;
  min-height: 0;
  display: flex;
}
.rail {
  display: flex;
  flex-direction: column;
  width: 20px;
  padding-top: 6px;
  align-items: center;
}
.rail-left {
  width: 35px;
  padding-left: 15px;
  border-right: 2px solid #484848;
}
.rail-left .rail-group {
  width: 18px;
  border-left: 1px solid #484848;
}
.rail-group {
  display: flex;
  flex-direction: column;
  align-items: center;
  justify-content: space-around;
  height: 132px;
}
.rail .i {
  width: 11px;
  height: 11px;
}
.rail-group.grow {
  flex: 1;
}
.rail-group.order {
  width: 16px;
  height: 66px;
  padding-top: 3px;
  border-top: 3px solid #484848;
  border-bottom: 1px solid #ddd;
}
.rail-right {
  border-left: 2px solid #484848;
}
.abc {
  height: 10px;
  font-size: 6px;
  color: #60b0ea;
}
.center {
  flex: 1;
  min-width: 0;
  display: flex;
  flex-direction: column;
}
.canvas {
  position: relative;
  flex: 1;
  display: flex;
  flex-direction: column;
  justify-content: flex-end;
  background: #9b9b9b;
}
.drawing {
  position: absolute;
  width: 100%;
  height: 100%;
  left: 0;
  top: 0;
}
.cad {
  font: 300 12px Inter, sans-serif;
  fill: #2222e0;
}
.viewctl {
  position: absolute;
  top: 5px;
  right: 5px;
}
.viewctl svg {
  display: block;
  width: 36px;
  height: 10px;
}
.viewcube {
  position: absolute;
  top: 21px;
  right: 6px;
  width: 60px;
  text-align: center;
}
.viewcube svg {
  display: block;
  width: 60px;
  height: 60px;
}
.compass {
  font: 9px "Liberation Sans", sans-serif;
  fill: #e2e2e2;
  text-anchor: middle;
}
.face {
  font-size: 6px;
  font-weight: 700;
  fill: #555;
}
.wcs {
  width: 30px;
  height: 11px;
  margin-top: 8px;
  border-radius: 3px;
  background: #b9b9c2;
  color: #fff;
  font-size: 7px;
}
.cmd {
  position: relative;
  display: flex;
  align-items: center;
  width: 55%;
  height: 17px;
  margin: 0 auto 1px 210px;
  padding-right: 2px;
  background: #e0e0e0;
}
.cmd-tools {
  width: 34px;
  height: 17px;
  background: #6a6a6a;
}
.prompt {
  width: 17px;
  height: 10px;
  margin: 0 3px;
}
.cmd input {
  flex: 1;
  font: italic 8px "Liberation Mono", monospace;
}
.cmd input::placeholder {
  color: #8a8a8a;
}
.below {
  display: flex;
  align-items: flex-end;
  height: 36px;
  padding: 0 0 2px 116px;
}
.blockbar {
  display: flex;
  align-items: center;
  gap: 2px;
  height: 15px;
  padding: 1px;
  border: 1px solid #484848;
}
.blockbar em {
  font: italic 9px "Liberation Serif", serif;
}

/* status bar */
.status {
  display: flex;
  align-items: center;
  justify-content: space-between;
  height: 18px;
  padding: 0 2px 0 316px;
  background: linear-gradient(90deg, #383838 316px, #505050 316px);
}
.status button {
  display: flex;
  align-items: center;
  justify-content: center;
  gap: 1px;
  height: 15px;
  min-width: 15px;
  white-space: nowrap;
}
.status .i-s {
  width: 7px;
  height: 7px;
}
.status .on {
  background: #5b8cc4;
}
.coords {
  padding: 0 5px 0 8px;
  border-right: 1px solid #888;
  white-space: nowrap;
}
.status .detail {
  border-left: 1px solid #777;
  padding: 0 2px 0 1px;
}
.status .cut {
  padding: 0 4px;
}
.status .elev {
  padding-right: 3px;
}

/* floating palettes */
.tool-palettes {
  position: absolute;
  left: 0;
  top: 127px;
  bottom: 28px;
  width: 14px;
  display: flex;
  flex-direction: column;
  align-items: center;
  background: #565656;
  border-right: 1px solid #404040;
  color: #b5b5b5;
}
.pal-ctl {
  width: 12px;
  height: 36px;
  margin-bottom: 42px;
}
.tool-palettes .vtext {
  margin-bottom: 5px;
}
.properties {
  position: absolute;
  left: 0;
  top: 309px;
  bottom: 28px;
  width: 160px;
  display: flex;
}
.prop-strip {
  width: 16px;
  display: flex;
  flex-direction: column;
  align-items: center;
  gap: 6px;
  padding: 29px 0 2px;
  color: #b5b5b5;
}
.prop-strip .vtext {
  margin-top: auto;
}
.prop-main {
  flex: 1;
  overflow: hidden;
  padding: 10px 9px 0 12px;
  border: 1px solid #404040;
  border-right: 0;
  background: #5c5c5c;
}
.prop-top {
  display: flex;
  align-items: center;
  gap: 4px;
  margin-bottom: 3px;
}
.prop-select {
  display: flex;
  align-items: center;
  width: 62px;
  height: 13px;
  padding: 0 2px;
  border: 1px solid #484848;
  background: #6c6c6c;
}
.prop-main h2 {
  display: flex;
  justify-content: space-between;
  height: 13px;
  margin: 0 0 3px;
  padding: 0 4px;
  border: 1px solid #404040;
  background: #4a4a4a;
  font-size: 8px;
  line-height: 11px;
  color: #fff;
}
.prop-main h2 b {
  font-size: 10px;
  color: #fff;
}
.prop-main .shut {
  color: #c4c4c4;
}
.props {
  width: 97px;
  height: 95px;
  margin: 0 0 0 11px;
  border-collapse: collapse;
  table-layout: fixed;
}
.props.one {
  height: 14px;
}
.props th, .props td {
  padding: 0 0 0 4px;
  border-bottom: 1px solid #525252;
  font-weight: 400;
  text-align: left;
  white-space: nowrap;
}
.props th {
  width: 42px;
}
.props td {
  padding-left: 1px;
  border-left: 1px solid #525252;
}
.props .swatch {
  margin: 0 4px 0 1px;
  vertical-align: -1px;
}
.props .rule {
  margin: 0 2px 3px 1px;
  width: 23px;
}
.prop-tabs {
  width: 15px;
  display: flex;
  flex-direction: column;
  margin-bottom: 12px;
}
.prop-tabs button {
  flex: 1;
  width: 15px;
  text-align: center;
  color: #a5a5a5;
  background: #565656;
  border: 1px solid #404040;
}
.prop-tabs .active {
  color: #eee;
  background: #5c5c5c;
}

/* windows taskbar */
.taskbar {
  display: flex;
  align-items: stretch;
  height: 26px;
  background: #1b1411;
}
.winbtn {
  width: 31px;
}
.winbtn svg {
  width: 11px;
  height: 11px;
}
.tasksearch {
  display: flex;
  align-items: center;
  gap: 6px;
  width: 223px;
  padding: 0 5px;
  background: #f0f0f0;
  color: #444;
}
.tasksearch svg {
  width: 15px;
  height: 15px;
}
.tasksearch input {
  flex: 1;
  font-size: 9px;
}
.tasksearch input::placeholder {
  color: #444;
}
.tasksearch .mic {
  width: 13px;
}
.apps {
  display: flex;
}
.apps button {
  width: 32px;
  border-bottom: 2px solid transparent;
  padding-top: 2px;
}
.apps .run {
  border-color: #6fb4e8;
}
.apps .cur {
  background: #4c4643;
}
.apps svg {
  display: block;
  width: 16px;
  height: 16px;
  margin: 0 auto;
}
.amazon {
  display: block;
  width: 16px;
  height: 16px;
  margin: 0 auto;
  background: #fff;
  border-bottom: 2px solid #f0a030;
  color: #111;
  font-size: 13px;
  font-weight: 700;
  line-height: 12px;
}
.tray {
  display: flex;
  align-items: center;
  gap: 7px;
  margin-left: auto;
}
.tray svg {
  width: 14px;
  height: 14px;
}
.tray svg:first-child {
  width: 16px;
  height: 16px;
  margin-right: 6px;
}
.tray svg:nth-child(2) {
  margin-right: 5px;
}
.clock {
  width: 52px;
  line-height: 12px;
  text-align: center;
  align-self: center;
}
.notes {
  position: relative;
  width: 31px;
}
.notes svg {
  width: 20px;
  height: 18px;
}
.notes span {
  position: absolute;
  left: 16px;
  top: 10px;
  font-size: 7px;
}
```
